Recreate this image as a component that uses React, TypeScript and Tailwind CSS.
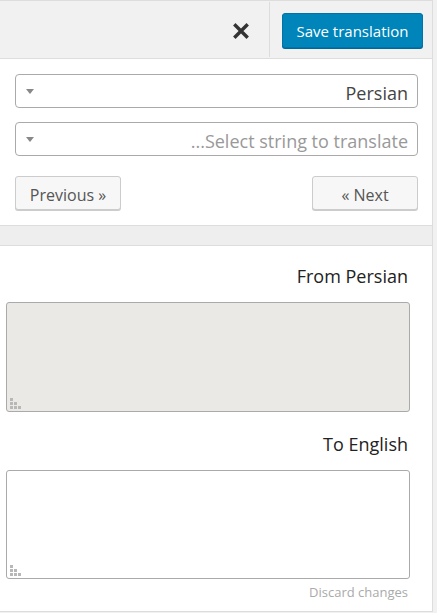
import React from "react";

const FONT = "font-['Open_Sans','Noto_Sans',sans-serif]";

function Caret() {
  return (
    <svg width="8" height="5" viewBox="0 0 8 5" className="shrink-0">
      <path d="M0 0h8L4 5z" fill="#888" />
    </svg>
  );
}

function Grip() {
  // resize grip in the bottom-left corner of an rtl textarea
  return (
    <svg
      width="11"
      height="11"
      viewBox="0 0 11 11"
      className="pointer-events-none absolute bottom-[2px] left-[3px]"
    >
      <g fill="#b8b8b8">
        <rect x="0" y="0" width="3" height="3" />
        <rect x="0" y="4" width="3" height="3" />
        <rect x="4" y="4" width="3" height="3" />
        <rect x="0" y="8" width="3" height="3" />
        <rect x="4" y="8" width="3" height="3" />
        <rect x="8" y="8" width="3" height="3" />
      </g>
    </svg>
  );
}

function Select({ value, placeholder }: { value?: string; placeholder?: string }) {
  return (
    <div className="flex h-[34px] items-center rounded-[4px] border border-[#aaa] bg-white pl-[10px] pr-[9px]">
      <Caret />
      <span
        className={`ml-auto truncate pt-[4px] text-[18px] leading-[22px] ${
          value ? "text-[#444]" : "text-[#999]"
        }`}
      >
        {value ?? placeholder}
      </span>
    </div>
  );
}

function NavButton({ label }: { label: string }) {
  return (
    <button
      type="button"
      className="flex h-[34px] w-[106px] items-center justify-center rounded-[3px] border border-[#ccc] bg-[#f7f7f7] pt-[3px] text-[16px] text-[#555] shadow-[0_1px_0_#ccc]"
    >
      {label}
    </button>
  );
}

export default function App() {
  return (
    <div className={`h-[613px] w-[437px] overflow-hidden bg-[#f1f1f1] ${FONT}`}>
      <div className="flex h-[612px] w-[433px] flex-col border-b border-r border-[#ddd] bg-white">
        {/* Top bar */}
        <div className="flex h-[59px] shrink-0 items-center justify-end border-y border-[#ddd] bg-[#f1f1f1] pr-[9px]">
          <button
            type="button"
            className="grid h-[55px] w-[56px] place-items-center pt-[3px]"
            aria-label="Close"
          >
            <svg width="16" height="16" viewBox="0 0 16 16">
              <path
                d="M2.5 2.5l11 11M13.5 2.5l-11 11"
                stroke="#333"
                strokeWidth="3.4"
                strokeLinecap="square"
              />
            </svg>
          </button>
          <div className="flex h-[55px] items-center border-l border-[#ddd] pl-[12px] pt-[2px]">
            <button
              type="button"
              className="h-[35px] w-[141px] rounded-[3px] border border-[#0073aa] bg-[#0085ba] pt-[2px] text-[15px] text-white shadow-[0_1px_0_#006799]"
            >
              Save translation
            </button>
          </div>
        </div>

        {/* Selectors */}
        <div className="flex flex-col gap-[14px] pl-[15px] pr-[14px] pt-[15px]">
          <Select value="Persian" />
          <Select placeholder="...Select string to translate" />
        </div>

        <div className="flex justify-between pb-[15px] pl-[15px] pr-[14px] pt-[20px]">
          <NavButton label="Previous »" />
          <NavButton label="« Next" />
        </div>

        <div className="h-[21px] shrink-0 border-y border-[#ddd] bg-[#eee]" />

        {/* Translation fields */}
        <div className="flex flex-col pl-[6px] pr-[24px]">
          <div className="mt-[17px] text-right text-[18px] leading-[26px] text-[#222]">
            From Persian
          </div>
          <div className="relative mt-[13px] h-[110px] w-[404px] rounded-[3px] border border-[#aaa] bg-[#ebe9e5]">
            <Grip />
          </div>
          <div className="mt-[19px] text-right text-[18px] leading-[26px] text-[#222]">
            To English
          </div>
          <div className="relative mt-[13px] h-[109px] w-[404px] rounded-[3px] border border-[#aaa] bg-white">
            <Grip />
          </div>
          <div className="mt-[4px] text-right text-[13px] leading-[18px] text-[#aaa]">
            Discard changes
          </div>
        </div>
      </div>
    </div>
  );
}
